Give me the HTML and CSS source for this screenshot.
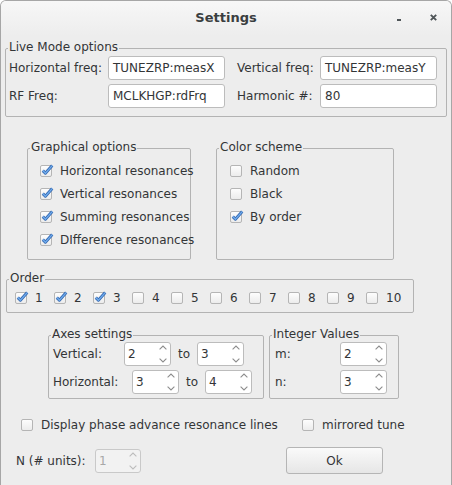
FILE: index.html
```html
<!DOCTYPE html>
<html>
<head>
<meta charset="utf-8">
<link rel="stylesheet" href="styles.css">
</head>
<body>
<div class="window">
  <div class="titlebar">
    <span></span>
    <span class="title">Settings</span>
    <span class="controls">
      <span class="min"></span>
      <svg class="close" width="7" height="7" viewBox="0 0 7 7"><path d="M0.8 0.8L6.2 6.2M6.2 0.8L0.8 6.2" stroke="#4f5558" stroke-width="1.9" fill="none"/></svg>
    </span>
  </div>

  <fieldset class="group live">
    <legend>Live Mode options</legend>
    <div class="live-grid">
      <span>Horizontal freq:</span>
      <span class="input">TUNEZRP:measX</span>
      <span class="lbl2">Vertical freq:</span>
      <span class="input">TUNEZRP:measY</span>
      <span>RF Freq:</span>
      <span class="input">MCLKHGP:rdFrq</span>
      <span class="lbl2">Harmonic #:</span>
      <span class="input">80</span>
    </div>
  </fieldset>

  <div class="row2">
    <fieldset class="group graph">
      <legend>Graphical options</legend>
      <div class="checklist">
        <label class="cb"><span class="box"><svg class="tick" width="14" height="13" viewBox="0 0 14 13"><path d="M2.8 7.6L5.4 10.2L12.2 2.6" stroke="#3468b2" stroke-width="3" fill="none" stroke-linejoin="round"/><path d="M2.8 7.6L5.4 10.2L12.2 2.6" stroke="#6eaaea" stroke-width="1.4" fill="none" stroke-linejoin="round"/></svg></span>Horizontal resonances</label>
        <label class="cb"><span class="box"><svg class="tick" width="14" height="13" viewBox="0 0 14 13"><path d="M2.8 7.6L5.4 10.2L12.2 2.6" stroke="#3468b2" stroke-width="3" fill="none" stroke-linejoin="round"/><path d="M2.8 7.6L5.4 10.2L12.2 2.6" stroke="#6eaaea" stroke-width="1.4" fill="none" stroke-linejoin="round"/></svg></span>Vertical resonances</label>
        <label class="cb"><span class="box"><svg class="tick" width="14" height="13" viewBox="0 0 14 13"><path d="M2.8 7.6L5.4 10.2L12.2 2.6" stroke="#3468b2" stroke-width="3" fill="none" stroke-linejoin="round"/><path d="M2.8 7.6L5.4 10.2L12.2 2.6" stroke="#6eaaea" stroke-width="1.4" fill="none" stroke-linejoin="round"/></svg></span>Summing resonances</label>
        <label class="cb"><span class="box"><svg class="tick" width="14" height="13" viewBox="0 0 14 13"><path d="M2.8 7.6L5.4 10.2L12.2 2.6" stroke="#3468b2" stroke-width="3" fill="none" stroke-linejoin="round"/><path d="M2.8 7.6L5.4 10.2L12.2 2.6" stroke="#6eaaea" stroke-width="1.4" fill="none" stroke-linejoin="round"/></svg></span>DIfference resonances</label>
      </div>
    </fieldset>
    <fieldset class="group color">
      <legend>Color scheme</legend>
      <div class="checklist">
        <label class="cb"><span class="box"></span>Random</label>
        <label class="cb"><span class="box"></span>Black</label>
        <label class="cb"><span class="box"><svg class="tick" width="14" height="13" viewBox="0 0 14 13"><path d="M2.8 7.6L5.4 10.2L12.2 2.6" stroke="#3468b2" stroke-width="3" fill="none" stroke-linejoin="round"/><path d="M2.8 7.6L5.4 10.2L12.2 2.6" stroke="#6eaaea" stroke-width="1.4" fill="none" stroke-linejoin="round"/></svg></span>By order</label>
      </div>
    </fieldset>
  </div>

  <fieldset class="group order">
    <legend>Order</legend>
    <div class="order-row">
      <label class="cb oc"><span class="box"><svg class="tick" width="14" height="13" viewBox="0 0 14 13"><path d="M2.8 7.6L5.4 10.2L12.2 2.6" stroke="#3468b2" stroke-width="3" fill="none" stroke-linejoin="round"/><path d="M2.8 7.6L5.4 10.2L12.2 2.6" stroke="#6eaaea" stroke-width="1.4" fill="none" stroke-linejoin="round"/></svg></span>1</label>
      <label class="cb oc"><span class="box"><svg class="tick" width="14" height="13" viewBox="0 0 14 13"><path d="M2.8 7.6L5.4 10.2L12.2 2.6" stroke="#3468b2" stroke-width="3" fill="none" stroke-linejoin="round"/><path d="M2.8 7.6L5.4 10.2L12.2 2.6" stroke="#6eaaea" stroke-width="1.4" fill="none" stroke-linejoin="round"/></svg></span>2</label>
      <label class="cb oc"><span class="box"><svg class="tick" width="14" height="13" viewBox="0 0 14 13"><path d="M2.8 7.6L5.4 10.2L12.2 2.6" stroke="#3468b2" stroke-width="3" fill="none" stroke-linejoin="round"/><path d="M2.8 7.6L5.4 10.2L12.2 2.6" stroke="#6eaaea" stroke-width="1.4" fill="none" stroke-linejoin="round"/></svg></span>3</label>
      <label class="cb oc"><span class="box"></span>4</label>
      <label class="cb oc"><span class="box"></span>5</label>
      <label class="cb oc"><span class="box"></span>6</label>
      <label class="cb oc"><span class="box"></span>7</label>
      <label class="cb oc"><span class="box"></span>8</label>
      <label class="cb oc"><span class="box"></span>9</label>
      <label class="cb oc"><span class="box"></span>10</label>
    </div>
  </fieldset>

  <div class="row3">
    <fieldset class="group axes">
      <legend>Axes settings</legend>
      <div class="spinrows">
        <div class="srow">
          <span class="slbl w71">Vertical:</span>
          <div class="spin"><span class="val">2</span><span class="arrows"><svg width="8" height="5" viewBox="0 0 8 5"><path d="M0.6 4.4L4 1L7.4 4.4" stroke="#8e8e8e" stroke-width="1.1" fill="none"/></svg><svg width="8" height="5" viewBox="0 0 8 5"><path d="M0.6 0.6L4 4L7.4 0.6" stroke="#8e8e8e" stroke-width="1.1" fill="none"/></svg></span></div>
          <span class="to">to</span>
          <div class="spin"><span class="val">3</span><span class="arrows"><svg width="8" height="5" viewBox="0 0 8 5"><path d="M0.6 4.4L4 1L7.4 4.4" stroke="#8e8e8e" stroke-width="1.1" fill="none"/></svg><svg width="8" height="5" viewBox="0 0 8 5"><path d="M0.6 0.6L4 4L7.4 0.6" stroke="#8e8e8e" stroke-width="1.1" fill="none"/></svg></span></div>
        </div>
        <div class="srow">
          <span class="slbl w79">Horizontal:</span>
          <div class="spin"><span class="val">3</span><span class="arrows"><svg width="8" height="5" viewBox="0 0 8 5"><path d="M0.6 4.4L4 1L7.4 4.4" stroke="#8e8e8e" stroke-width="1.1" fill="none"/></svg><svg width="8" height="5" viewBox="0 0 8 5"><path d="M0.6 0.6L4 4L7.4 0.6" stroke="#8e8e8e" stroke-width="1.1" fill="none"/></svg></span></div>
          <span class="to">to</span>
          <div class="spin"><span class="val">4</span><span class="arrows"><svg width="8" height="5" viewBox="0 0 8 5"><path d="M0.6 4.4L4 1L7.4 4.4" stroke="#8e8e8e" stroke-width="1.1" fill="none"/></svg><svg width="8" height="5" viewBox="0 0 8 5"><path d="M0.6 0.6L4 4L7.4 0.6" stroke="#8e8e8e" stroke-width="1.1" fill="none"/></svg></span></div>
        </div>
      </div>
    </fieldset>
    <fieldset class="group integer">
      <legend>Integer Values</legend>
      <div class="spinrows int">
        <div class="srow">
          <span class="slbl w65">m:</span>
          <div class="spin"><span class="val">2</span><span class="arrows"><svg width="8" height="5" viewBox="0 0 8 5"><path d="M0.6 4.4L4 1L7.4 4.4" stroke="#8e8e8e" stroke-width="1.1" fill="none"/></svg><svg width="8" height="5" viewBox="0 0 8 5"><path d="M0.6 0.6L4 4L7.4 0.6" stroke="#8e8e8e" stroke-width="1.1" fill="none"/></svg></span></div>
        </div>
        <div class="srow">
          <span class="slbl w65">n:</span>
          <div class="spin"><span class="val">3</span><span class="arrows"><svg width="8" height="5" viewBox="0 0 8 5"><path d="M0.6 4.4L4 1L7.4 4.4" stroke="#8e8e8e" stroke-width="1.1" fill="none"/></svg><svg width="8" height="5" viewBox="0 0 8 5"><path d="M0.6 0.6L4 4L7.4 0.6" stroke="#8e8e8e" stroke-width="1.1" fill="none"/></svg></span></div>
        </div>
      </div>
    </fieldset>
  </div>

  <div class="row4">
    <label class="cb phase"><span class="box"></span>Display phase advance resonance lines</label>
    <label class="cb"><span class="box"></span>mirrored tune</label>
  </div>

  <div class="row5">
    <span class="nlbl">N (# units):</span>
    <div class="spin disabled"><span class="val">1</span><span class="arrows"><svg width="8" height="5" viewBox="0 0 8 5"><path d="M0.6 4.4L4 1L7.4 4.4" stroke="#bdbdbd" stroke-width="1.1" fill="none"/></svg><svg width="8" height="5" viewBox="0 0 8 5"><path d="M0.6 0.6L4 4L7.4 0.6" stroke="#bdbdbd" stroke-width="1.1" fill="none"/></svg></span></div>
    <button class="ok">Ok</button>
  </div>
</div>
</body>
</html>
```

FILE: styles.css
```css
* { box-sizing: border-box; }

body {
  margin: 0;
  background: #ffffff;
  font-family: "DejaVu Sans", sans-serif;
  font-size: 12px;
  color: #333537;
}

.window {
  width: 452px;
  height: 485px;
  border: 1px solid #a6a6a6;
  border-bottom: none;
  border-radius: 6px 6px 0 0;
  background: #ededed;
  overflow: hidden;
}

.titlebar {
  height: 35px;
  padding-bottom: 2px;
  display: grid;
  grid-template-columns: 1fr auto 1fr;
  align-items: center;
  background: linear-gradient(#f7f7f7, #ededed);
}

.title {
  font-weight: bold;
  font-size: 13px;
  line-height: 14px;
  color: #3a3e40;
}

.controls {
  justify-self: end;
  display: flex;
  align-items: center;
  padding-right: 14px;
}

.min {
  width: 4px;
  height: 2px;
  background: #4f5558;
  margin-top: 4px;
  margin-right: 29px;
}

.close { display: block; }

.group {
  margin: 0;
  padding: 0;
  border: 1px solid #b3b3b3;
  border-radius: 2px;
  min-width: 0;
}

.group > legend {
  padding: 0 1px 3px;
  margin-left: 2px;
  line-height: 14px;
}

/* Live mode */
.live {
  margin: 4px 4px 0 4px;
}

.live-grid {
  display: grid;
  grid-template-columns: 99px 117px 95px 117px;
  row-gap: 4px;
  align-items: center;
  padding: 0 0 8px 3px;
  margin-top: -1px;
}

.lbl2 { padding-left: 12px; }

.input {
  height: 24px;
  line-height: 22px;
  border: 1px solid #bcbcbc;
  border-radius: 3px;
  background: #ffffff;
  padding-left: 4px;
  white-space: nowrap;
}

/* checkboxes */
.cb {
  display: flex;
  align-items: center;
  white-space: nowrap;
}

.box {
  position: relative;
  width: 12px;
  height: 12px;
  flex: none;
  margin-right: 8px;
  border: 1px solid #b5b5b5;
  border-radius: 2px;
  background: linear-gradient(#fdfdfd, #ececec);
}

.tick {
  position: absolute;
  left: -1px;
  top: -3px;
}

.row2 {
  display: flex;
  gap: 25px;
  margin: 23px 0 0 26px;
}

.graph { width: 164px; }
.color { width: 178px; }

.checklist {
  padding: 2px 0 8px 12px;
}

.color .checklist { padding-left: 13px; }

.checklist .cb { height: 23px; }

/* order */
.order {
  width: 408px;
  margin: 11px 0 0 5px;
}

.order-row {
  display: flex;
  height: 19px;
  padding-left: 8px;
  margin-bottom: 5px;
}

.oc { width: 39px; }

/* axes */
.row3 {
  display: flex;
  gap: 5px;
  margin: 14px 0 0 47px;
}

.axes { width: 216px; }
.integer { width: 130px; }

.spinrows {
  display: flex;
  flex-direction: column;
  gap: 4px;
  margin-top: -2px;
  padding: 0 0 4px 4px;
}

.spinrows.int { padding-left: 5px; }

.srow {
  display: flex;
  align-items: center;
}

.slbl { flex: none; }
.w71 { width: 71px; }
.w79 { width: 79px; }
.w65 { width: 65px; }

.to {
  width: 12px;
  margin: 0 7px;
}

.spin {
  display: flex;
  width: 47px;
  height: 24px;
  border: 1px solid #bcbcbc;
  border-radius: 3px;
  background: #ffffff;
  flex: none;
}

.val {
  flex: 1;
  padding-left: 3px;
  line-height: 22px;
}

.arrows {
  width: 14px;
  display: flex;
  flex-direction: column;
  justify-content: space-between;
  align-items: center;
  padding: 2px 0 2px;
}

.arrows svg { display: block; }

.spin.disabled {
  width: 46px;
  background: #f2f2f2;
  border-color: #c9c9c9;
  color: #a8a8a8;
}

/* bottom */
.row4 {
  display: flex;
  height: 20px;
  margin-top: 16px;
  padding-left: 20px;
}

.phase { width: 281px; }

.row5 {
  display: flex;
  align-items: center;
  height: 27px;
  margin-top: 12px;
  padding-left: 15px;
}

.nlbl { width: 79px; }

.ok {
  margin-left: 145px;
  width: 97px;
  height: 27px;
  border: 1px solid #b5b5b5;
  border-radius: 3px;
  background: linear-gradient(#fafafa, #e6e6e6);
  font-family: "DejaVu Sans", sans-serif;
  font-size: 12px;
  color: #333537;
  padding: 0;
}
```
